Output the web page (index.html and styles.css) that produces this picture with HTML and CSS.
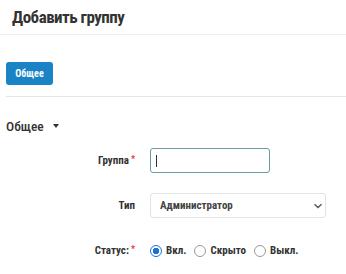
FILE: index.html
```html
<!DOCTYPE html>
<html lang="ru">
<head>
    <meta charset="UTF-8">
    <title>Добавить группу</title>
    <link rel="stylesheet" href="styles.css">
</head>
<body>
    <div class="page-header">
        <h1>Добавить группу</h1>
    </div>

    <div class="tabs">
        <button class="tab-button">Общее</button>
    </div>

    <div class="section">
        <h2 class="section-title">Общее <span class="caret"></span></h2>

        <div class="form-row">
            <label class="form-label">Группа<span class="required">*</span></label>
            <div class="input-text"><span class="text-caret"></span></div>
        </div>

        <div class="form-row">
            <label class="form-label">Тип</label>
            <div class="select-box">
                <span>Администратор</span>
                <svg width="10" height="6" viewBox="0 0 10 6"><path d="M1.5 1.2l3.5 3.3 3.5-3.3" fill="none" stroke="#555" stroke-width="1.4"/></svg>
            </div>
        </div>

        <div class="form-row">
            <label class="form-label">Статус:<span class="required">*</span></label>
            <div class="radios">
                <span class="radio checked"></span><span class="radio-text">Вкл.</span>
                <span class="radio"></span><span class="radio-text">Скрыто</span>
                <span class="radio"></span><span class="radio-text">Выкл.</span>
            </div>
        </div>
    </div>
</body>
</html>
```

FILE: styles.css
```css
body {
    margin: 0;
    background-color: #fff;
    font-family: Roboto, "DejaVu Sans Condensed", sans-serif;
    font-stretch: 75%;
    color: #333;
}

.page-header {
    height: 35px;
    border-bottom: 1px solid #eee;
    padding-left: 12px;
    box-sizing: border-box;
}

.page-header h1 {
    margin: 0;
    padding-top: 7px;
    font-size: 17px;
    letter-spacing: -0.5px;
    font-weight: bold;
    color: #333;
}

.tabs {
    margin: 0 0 0 6px;
    padding: 27px 0 11px 0;
    border-bottom: 1px solid #e5e5e5;
}

.tab-button {
    display: block;
    width: 47px;
    height: 23px;
    background-color: #1a83c6;
    color: #fff;
    border: none;
    border-radius: 3px;
    font-family: Roboto, sans-serif;
    font-stretch: 75%;
    font-weight: bold;
    font-size: 10px;
    padding: 0;
}

.section {
    padding-left: 6px;
}

.section-title {
    margin: 21px 0 14px 0;
    font-size: 13.5px;
    font-weight: 500;
    display: flex;
    align-items: center;
    gap: 9px;
}

.caret {
    width: 0;
    height: 0;
    border-left: 3px solid transparent;
    border-right: 3px solid transparent;
    border-top: 4px solid #333;
}

.form-row {
    display: grid;
    grid-template-columns: 129px 1fr;
    column-gap: 15px;
    align-items: center;
    min-height: 25px;
    margin-bottom: 20px;
}

.form-label {
    text-align: right;
    font-size: 11px;
    font-weight: bold;
    color: #333;
}

.required {
    color: #e33;
    margin-left: 2px;
    font-size: 9px;
    vertical-align: top;
}

.input-text {
    width: 120px;
    height: 25px;
    box-sizing: border-box;
    border: 1px solid #6b9aa3;
    border-radius: 3px;
    padding: 0 5px;
    display: flex;
    align-items: center;
}

.text-caret {
    width: 1px;
    height: 12px;
    background-color: #333;
}

.select-box {
    width: 176px;
    height: 25px;
    box-sizing: border-box;
    border: 1px solid #e3e3e3;
    border-radius: 3px;
    display: flex;
    align-items: center;
    justify-content: space-between;
    padding: 0 2px 0 9px;
    font-size: 11px;
    font-weight: bold;
    color: #444;
}

.radios {
    display: flex;
    align-items: center;
    font-size: 11px;
    font-weight: bold;
    color: #333;
}

.radio {
    width: 12px;
    height: 12px;
    border: 1px solid #999;
    border-radius: 50%;
    margin-right: 4px;
    box-sizing: border-box;
}

.radio.checked {
    border: 1px solid #1a73d8;
    background: radial-gradient(circle, #1a73d8 3px, #fff 3.5px);
}

.radio-text {
    margin-right: 8px;
}
```
